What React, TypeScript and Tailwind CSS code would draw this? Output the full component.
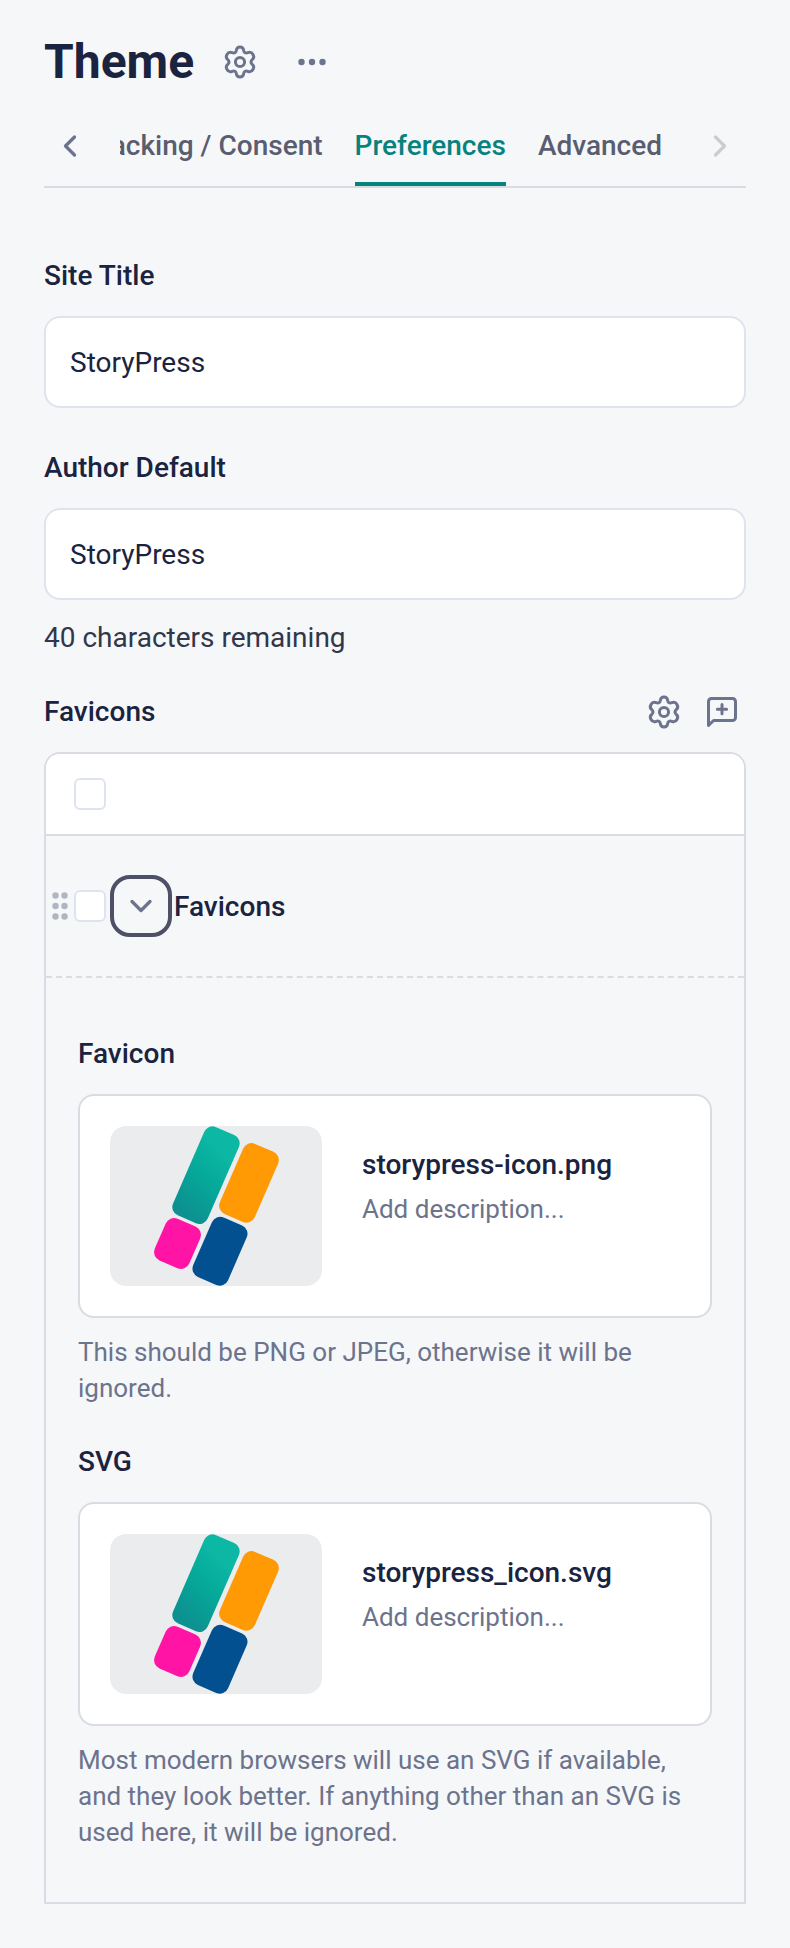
import { useState } from 'react'
import { ChevronDown, ChevronLeft, ChevronRight } from 'lucide-react'

type FieldProps = {
  label: string
  value: string
}

type IconProps = {
  className?: string
}

type Asset = {
  label: string
  fileName: string
  help: string
}

const TABS = ['Tracking / Consent', 'Preferences', 'Advanced']

const ASSETS: Asset[] = [
  {
    label: 'Favicon',
    fileName: 'storypress-icon.png',
    help: 'This should be PNG or JPEG, otherwise it will be ignored.',
  },
  {
    label: 'SVG',
    fileName: 'storypress_icon.svg',
    help: 'Most modern browsers will use an SVG if available, and they look better. If anything other than an SVG is used here, it will be ignored.',
  },
]

function GearIcon({ className }: IconProps): React.JSX.Element {
  return (
    <svg viewBox="-17 -17 34 34" fill="none" stroke="currentColor" strokeWidth="3" strokeLinejoin="round" className={className}>
      <circle r="4.6" />
      <path d="M-3.7 -11.6C-3.4 -13.8 -2.2 -15 0 -15S3.4 -13.8 3.7 -11.6C4.1 -9.3 5.6 -8.5 7.8 -9.3C9.9 -10.1 11.7 -9.8 13 -7.5S13.9 -3.6 12.1 -2.2C10.6 -.8 10.6 .8 12.1 2.2C13.9 3.6 14.3 5.2 13 7.5S9.9 10.1 7.8 9.3C5.6 8.5 4.1 9.3 3.7 11.6C3.4 13.8 2.2 15 0 15S-3.4 13.8 -3.7 11.6C-4.1 9.3 -5.6 8.5 -7.8 9.3C-9.9 10.1 -11.7 9.8 -13 7.5S-13.9 3.6 -12.1 2.2C-10.6 .8 -10.6 -.8 -12.1 -2.2C-13.9 -3.6 -14.3 -5.2 -13 -7.5S-9.9 -10.1 -7.8 -9.3C-5.6 -8.5 -4.1 -9.3 -3.7 -11.6Z" />
    </svg>
  )
}

function MoreIcon({ className }: IconProps): React.JSX.Element {
  return (
    <svg viewBox="0 0 28 8" fill="currentColor" className={className}>
      <circle cx="3.5" cy="4" r="3.2" />
      <circle cx="14" cy="4" r="3.2" />
      <circle cx="24.5" cy="4" r="3.2" />
    </svg>
  )
}

function CommentPlusIcon({ className }: IconProps): React.JSX.Element {
  return (
    <svg viewBox="0 0 32 32" fill="none" stroke="currentColor" strokeWidth="3" strokeLinecap="round" strokeLinejoin="round" className={className}>
      <path d="M2.5 29.4V5.5a3 3 0 0 1 3-3h21a3 3 0 0 1 3 3v16a3 3 0 0 1-3 3H7.6Z" />
      <path d="M16 8.6v9.2M11.4 13.2h9.2" />
    </svg>
  )
}

function BrandMark(): React.JSX.Element {
  return (
    <svg viewBox="0 0 212 160" className="h-40 w-53">
      <defs>
        <linearGradient id="teal" gradientUnits="userSpaceOnUse" x1="-14" y1="40" x2="14" y2="-35">
          <stop offset="0" stopColor="#0d9090" />
          <stop offset="0.5" stopColor="#05a99a" />
          <stop offset="0.9" stopColor="#0cb8a4" />
        </linearGradient>
      </defs>
      <rect x="-18.9" y="-48.1" width="37.8" height="96.2" rx="9" transform="translate(96 49.2) rotate(23.5)" fill="url(#teal)" />
      <rect x="-19" y="-38.2" width="38" height="76.4" rx="9" transform="translate(139 56.9) rotate(23.5)" fill="#ff9a05" />
      <rect x="-18.8" y="-22.7" width="37.6" height="45.4" rx="9" transform="translate(67.5 117.5) rotate(23.5)" fill="#ff14a5" />
      <rect x="-19" y="-32.4" width="38" height="64.8" rx="9" transform="translate(110 125.2) rotate(23.5)" fill="#02508f" />
    </svg>
  )
}

function TextField({ label, value }: FieldProps): React.JSX.Element {
  return (
    <label className="block">
      <span className="block h-10 font-medium">{label}</span>
      <input
        defaultValue={value}
        className="mt-5 block h-23 w-full rounded-2xl border-2 border-[#dde4ec] bg-white px-6 outline-none"
      />
    </label>
  )
}

function Checkbox(): React.JSX.Element {
  return (
    <input
      type="checkbox"
      className="block size-8 shrink-0 appearance-none rounded-md border-2 border-[#dde4ee] bg-white"
    />
  )
}

function AssetField({ label, fileName, help }: Asset): React.JSX.Element {
  return (
    <section>
      <h3 className="font-medium">{label}</h3>
      <div className="mt-5 flex h-56 rounded-2xl border-2 border-[#dadce3] bg-white p-[30px]">
        <div className="h-40 w-53 shrink-0 overflow-hidden rounded-2xl bg-[#ebecee]">
          <BrandMark />
        </div>
        <div className="ml-10 pt-[19px]">
          <p className="font-medium">{fileName}</p>
          <p className="mt-1.5 text-[26px] leading-9 text-[#6c738c]">Add description...</p>
        </div>
      </div>
      <p className="mt-4 text-[26px] leading-9 text-[#6c738c]">{help}</p>
    </section>
  )
}

export default function App(): React.JSX.Element {
  const [activeTab, setActiveTab] = useState('Preferences')
  const [isOpen, setIsOpen] = useState(true)

  return (
    <main className="h-[1948px] w-[790px] bg-[#f6f7f9] px-11 pt-8 font-['Roboto',sans-serif] text-[28px] leading-10 text-[#1a2340]">
      <header className="flex h-15 items-center">
        <h1 className="text-[48px] leading-15 font-bold">Theme</h1>
        <button className="ml-[29px] text-[#6c738c]" aria-label="Settings">
          <GearIcon className="size-[34px]" />
        </button>
        <button className="ml-[41px] text-[#6c738c]" aria-label="More">
          <MoreIcon className="h-2 w-7" />
        </button>
      </header>

      <nav className="mt-6 flex h-18 border-b-2 border-[#dadce3]">
        <button className="flex w-[76px] shrink-0 items-start pt-3 pl-2" aria-label="Previous tabs">
          <ChevronLeft className="size-9 text-[#6c738c]" strokeWidth={2.2} />
        </button>
        <div className="flex w-[542px] justify-end gap-8 overflow-hidden font-medium">
          {TABS.map((tab) => (
            <button
              key={tab}
              onClick={() => setActiveTab(tab)}
              className={`h-[70px] shrink-0 border-b-4 pb-1.5 whitespace-nowrap ${
                tab === activeTab ? 'border-[#06827f] text-[#06827f]' : 'border-transparent text-[#595d70]'
              }`}
            >
              {tab}
            </button>
          ))}
        </div>
        <button className="ml-auto flex items-start pt-3 pr-2" aria-label="Next tabs">
          <ChevronRight className="size-9 text-[#cbccd2]" strokeWidth={2.2} />
        </button>
      </nav>

      <div className="mt-[68px] space-y-10">
        <TextField label="Site Title" value="StoryPress" />
        <TextField label="Author Default" value="StoryPress" />
      </div>
      <p className="mt-[18px] text-[#32364b]">40 characters remaining</p>

      <div className="mt-[34px] flex items-center text-[#6c738c]">
        <h2 className="mr-auto font-medium text-[#1a2340]">Favicons</h2>
        <GearIcon className="size-[34px]" />
        <CommentPlusIcon className="mr-2 ml-[25px] size-8" />
      </div>

      <div className="mt-5 h-[1152px] overflow-hidden rounded-t-2xl border-2 border-[#dadce3]">
        <div className="flex h-[82px] items-center border-b-2 border-[#dadce3] bg-white pl-7">
          <Checkbox />
        </div>
        <div className="flex h-[142px] items-center border-b-2 border-dashed border-[#dadce3] pl-[5px]">
          <svg viewBox="0 0 18 30" className="mr-[5px] h-[30px] w-[18px] shrink-0 text-[#b1b5c1]" fill="currentColor">
            {[4.5, 15, 25.5].map((y) => (
              <g key={y}>
                <circle cx="4.5" cy={y} r="3.2" />
                <circle cx="13.5" cy={y} r="3.2" />
              </g>
            ))}
          </svg>
          <Checkbox />
          <button
            onClick={() => setIsOpen(!isOpen)}
            aria-expanded={isOpen}
            aria-label="Toggle favicons"
            className="ml-1 flex size-[62px] shrink-0 items-center justify-center rounded-[20px] border-4 border-[#4d5066] text-[#6c738c]"
          >
            <ChevronDown className="size-9" strokeWidth={2.2} />
          </button>
          <span className="ml-0.5 pt-0.5 font-medium">Favicons</span>
        </div>
        {isOpen && (
          <div className="space-y-9 px-8 pt-14">
            {ASSETS.map((asset) => (
              <AssetField key={asset.label} {...asset} />
            ))}
          </div>
        )}
      </div>
    </main>
  )
}
